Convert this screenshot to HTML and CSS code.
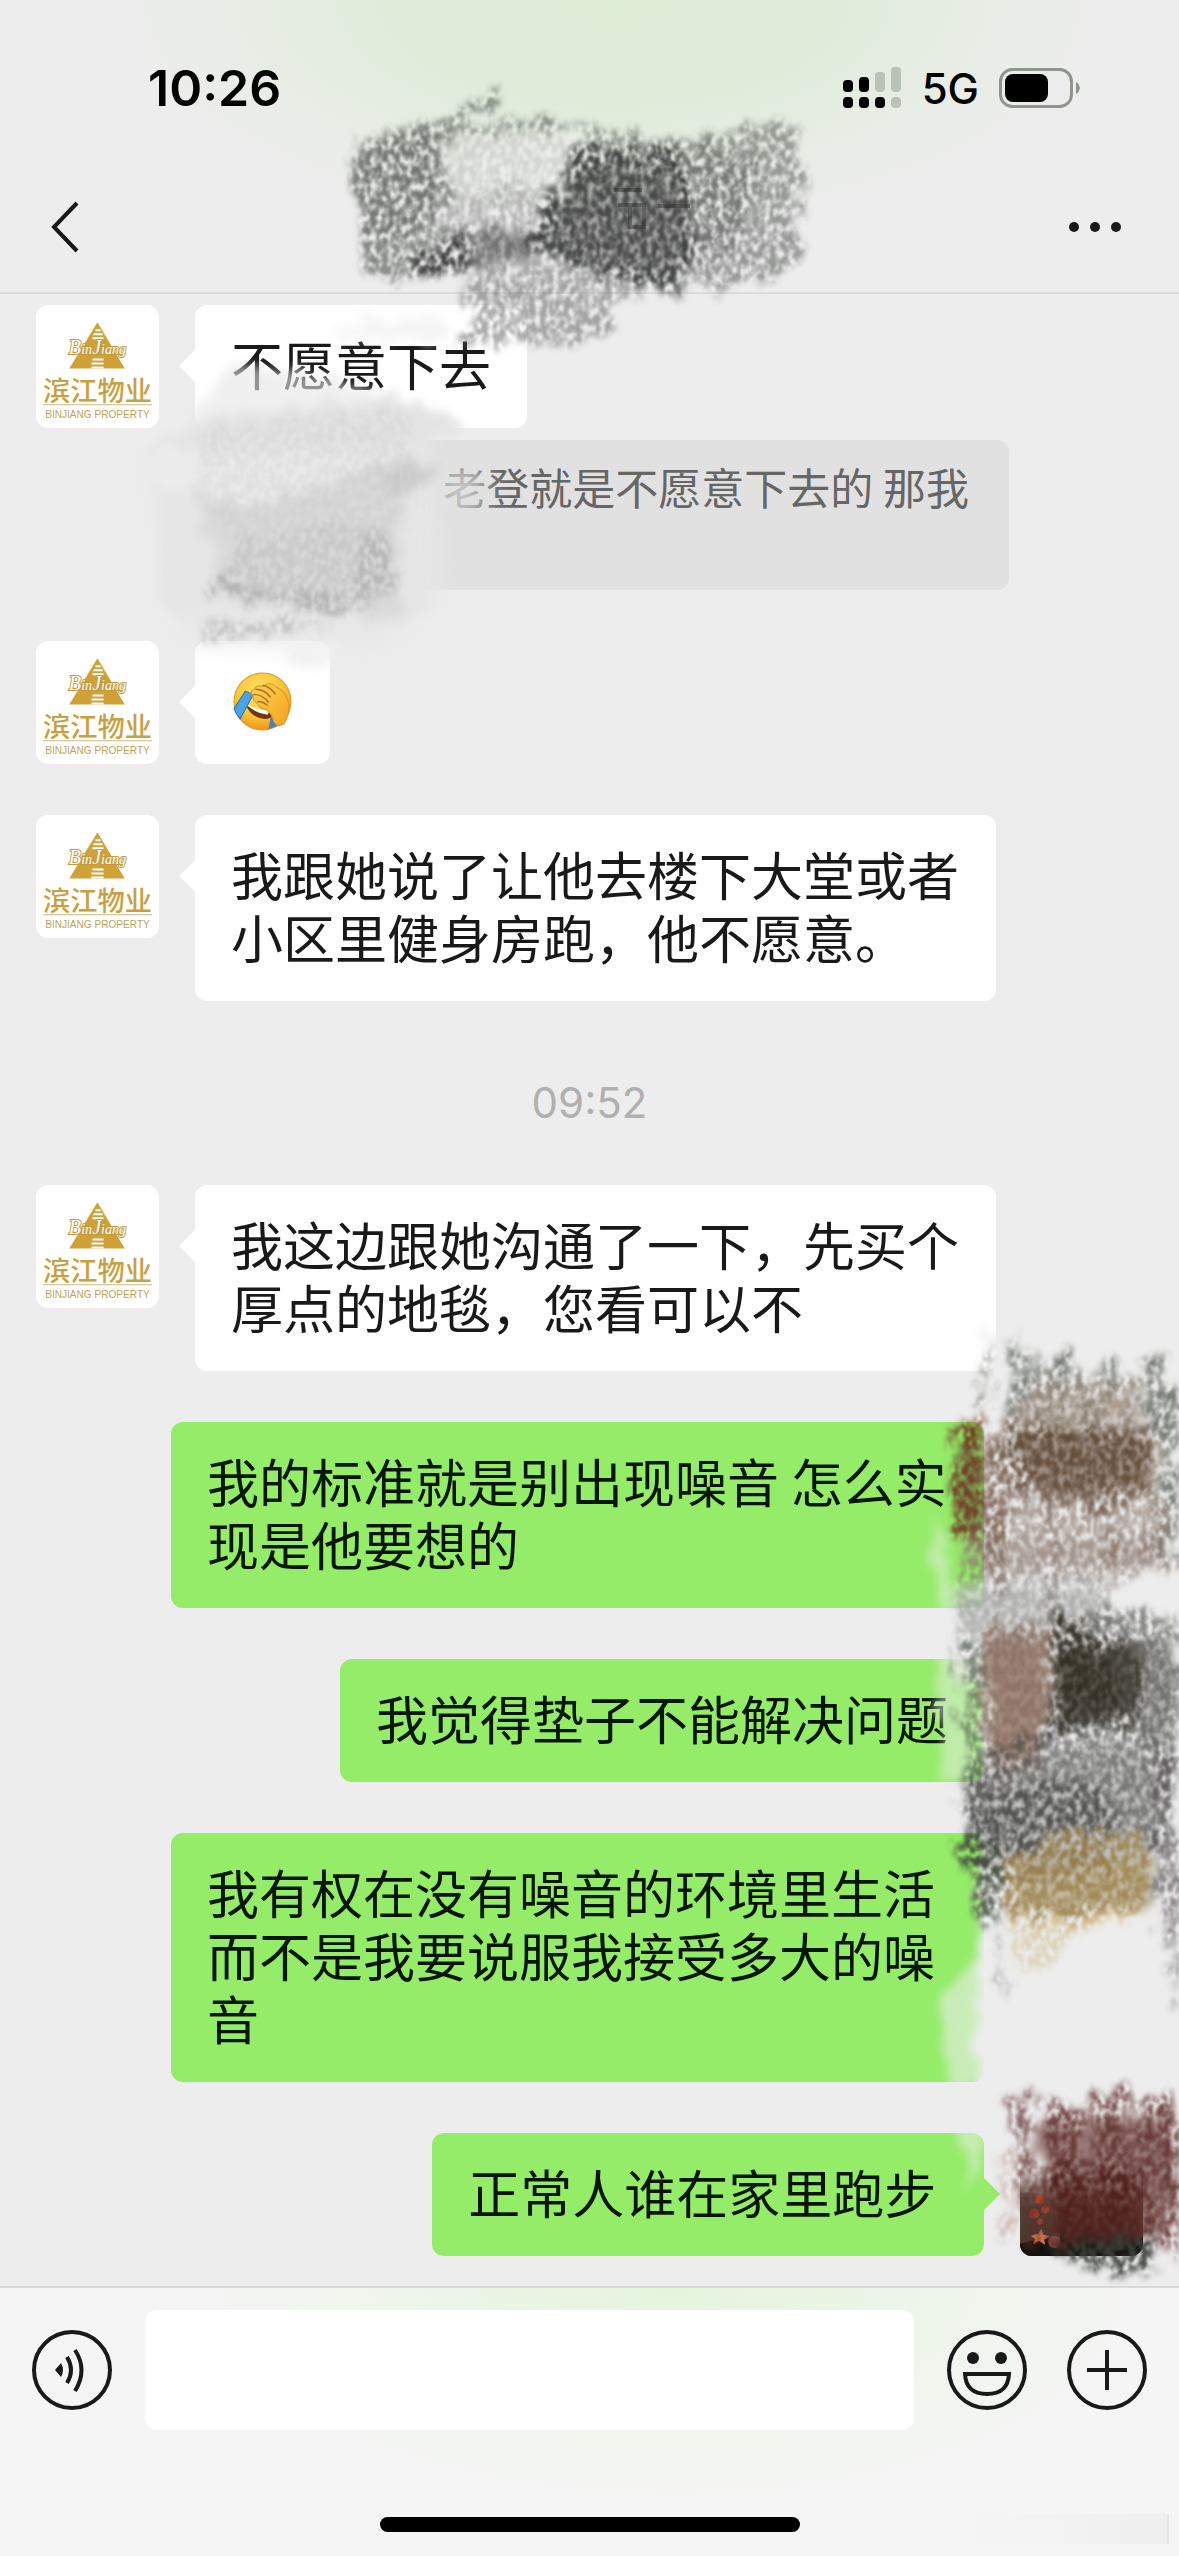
FILE: index.html
```html
<!DOCTYPE html>
<html lang="zh-CN">
<head>
  <meta charset="UTF-8">
  <meta name="viewport" content="width=device-width, initial-scale=1.0">
  <title>聊天</title>
  <link rel="stylesheet" href="styles.css">
</head>
<body>
  <!-- shared symbols and textures -->
  <svg class="defs" aria-hidden="true">
    <defs>
      <filter id="chalk" x="-10%" y="-10%" width="120%" height="120%" color-interpolation-filters="sRGB">
        <feTurbulence type="fractalNoise" baseFrequency="0.17 0.12" numOctaves="3" seed="4" result="noise"/>
        <feColorMatrix in="noise" type="matrix" values="0 0 0 0 0  0 0 0 0 0  0 0 0 0 0  3 0 0 0 -0.85" result="grain"/>
        <feTurbulence type="fractalNoise" baseFrequency="0.07 0.03" numOctaves="4" seed="7" result="wave"/>
        <feDisplacementMap in="SourceGraphic" in2="wave" scale="40" xChannelSelector="G" yChannelSelector="B" result="rough"/>
        <feGaussianBlur in="rough" stdDeviation="3" result="feather"/>
        <feComposite in="feather" in2="grain" operator="in"/>
        <feGaussianBlur stdDeviation="1"/>
      </filter>
      <filter id="smear" x="-20%" y="-20%" width="140%" height="140%" color-interpolation-filters="sRGB">
        <feTurbulence type="fractalNoise" baseFrequency="0.05" numOctaves="3" seed="9" result="noise"/>
        <feDisplacementMap in="SourceGraphic" in2="noise" scale="30" xChannelSelector="R" yChannelSelector="G"/>
        <feGaussianBlur stdDeviation="5"/>
      </filter>
      <filter id="soft" x="-30%" y="-30%" width="160%" height="160%">
        <feGaussianBlur stdDeviation="12"/>
      </filter>
      <symbol id="logo" viewBox="0 0 122 122">
        <path d="M61 17 L88 63 H33 Z" fill="#cfa136"/>
        <path d="M59 25h5M57 29h9M56 33h11M56 54h11M55 58h12M55 62h12" stroke="#fff" stroke-width="2"/>
        <text x="61" y="49" text-anchor="middle" class="logo-script"><tspan class="logo-cap">B</tspan>in<tspan class="logo-cap">J</tspan>iang</text>
        <text x="61" y="95" text-anchor="middle" class="logo-name">滨江物业</text>
        <path d="M7 99H115" stroke="#cdb87c" stroke-width="1"/>
        <text x="61" y="112" text-anchor="middle" class="logo-sub">BINJIANG PROPERTY</text>
      </symbol>
    </defs>
  </svg>

  <div class="screen">
    <header class="top">
      <div class="status">
        <span class="clock">10:26</span>
        <div class="status-right">
          <svg class="signal" viewBox="0 0 60 42">
            <g fill="#000">
              <rect x="1" y="13" width="10" height="12" rx="4"/>
              <rect x="17" y="10" width="10" height="15" rx="4"/>
              <rect x="1" y="30" width="10" height="11" rx="4"/>
              <rect x="17" y="30" width="10" height="11" rx="4"/>
              <rect x="33" y="30" width="10" height="11" rx="4"/>
            </g>
            <g fill="#b9c2b6">
              <rect x="33" y="5" width="10" height="20" rx="4"/>
              <rect x="49" y="0" width="10" height="25" rx="4"/>
              <rect x="49" y="30" width="10" height="11" rx="4"/>
            </g>
          </svg>
          <span class="network">5G</span>
          <svg class="battery" viewBox="0 0 82 40">
            <rect x="1.5" y="1.5" width="71" height="37" rx="12" fill="none" stroke="#8f948d" stroke-width="3"/>
            <rect x="6" y="6" width="43" height="28" rx="8" fill="#000"/>
            <path d="M77 14c5 2 5 10 0 12z" fill="#8f948d"/>
          </svg>
        </div>
      </div>
      <nav class="navbar">
        <button class="icon-button" aria-label="返回">
          <svg class="back" viewBox="0 0 30 52"><path d="M27 2 L4 26 L27 50" fill="none" stroke="#191919" stroke-width="4"/></svg>
        </button>
        <button class="icon-button" aria-label="更多">
          <svg class="more" viewBox="0 0 54 12"><g fill="#191919"><circle cx="6" cy="6" r="5"/><circle cx="27" cy="6" r="5"/><circle cx="48" cy="6" r="5"/></g></svg>
        </button>
      </nav>
    </header>

    <main class="chat">
      <div class="message received tight">
        <svg class="avatar"><use href="#logo"/></svg>
        <p class="bubble">不愿意下去</p>
      </div>
      <div class="notice">老登就是不愿意下去的 那我</div>
      <div class="message received">
        <svg class="avatar"><use href="#logo"/></svg>
        <p class="bubble">
          <svg class="emoji" viewBox="0 0 58 58" role="img" aria-label="捂脸">
            <defs>
              <radialGradient id="face" cx="45%" cy="35%" r="65%">
                <stop offset="0" stop-color="#ffe672"/>
                <stop offset=".65" stop-color="#fcc534"/>
                <stop offset="1" stop-color="#ee951c"/>
              </radialGradient>
              <linearGradient id="hand" x1="0" y1="0" x2="1" y2="1">
                <stop offset="0" stop-color="#ffd452"/>
                <stop offset="1" stop-color="#f4a21f"/>
              </linearGradient>
            </defs>
            <circle cx="29" cy="29" r="28" fill="url(#face)" stroke="#d99a2a"/>
            <path d="M13 33 Q27 41 41 40 Q38 47 30 46 Q17 44 13 33Z" fill="#6d3714"/>
            <path d="M14 32 Q25 38 36 38 L34 42 Q20 40 14 32Z" fill="#fff"/>
            <path d="M12 19 L20 22 L7 46 Q3 42 1 36Z" fill="#4da3e8" stroke="#3273aa"/>
            <path d="M37 45 L44 43 L43 53 L35 56Z" fill="#3f7fca"/>
            <path d="M20 23 Q15 20 21 17 Q23 12 30 14 Q36 8 43 15 Q51 18 54 28 Q57 40 50 51 Q44 55 40 49 Q39 42 33 37 Q26 36 24 31 Q18 27 20 23Z" fill="url(#hand)" stroke="#dd922b"/>
            <path d="M22 17 Q31 17 37 25 M20 22 Q29 22 35 30 M29 13 Q36 14 42 22 M24 29 Q30 29 34 33" fill="none" stroke="#a7702b" stroke-width="1.4"/>
          </svg>
        </p>
      </div>
      <div class="message received">
        <svg class="avatar"><use href="#logo"/></svg>
        <p class="bubble">我跟她说了让他去楼下大堂或者小区里健身房跑，他不愿意。</p>
      </div>
      <time class="time">09:52</time>
      <div class="message received">
        <svg class="avatar"><use href="#logo"/></svg>
        <p class="bubble">我这边跟她沟通了一下，先买个厚点的地毯，您看可以不</p>
      </div>
      <div class="message sent">
        <p class="bubble">我的标准就是别出现噪音 怎么实现是他要想的</p>
        <div class="avatar blank"></div>
      </div>
      <div class="message sent">
        <p class="bubble">我觉得垫子不能解决问题</p>
        <div class="avatar blank"></div>
      </div>
      <div class="message sent">
        <p class="bubble">我有权在没有噪音的环境里生活 而不是我要说服我接受多大的噪音</p>
        <div class="avatar blank"></div>
      </div>
      <div class="message sent last">
        <p class="bubble">正常人谁在家里跑步&nbsp;</p>
        <svg class="avatar photo" viewBox="0 0 122 122">
          <defs>
            <linearGradient id="fade" x1="0" y1="0" x2="0" y2="1">
              <stop offset=".3" stop-color="#4a302a" stop-opacity="0"/>
              <stop offset=".6" stop-color="#43271f"/>
              <stop offset="1" stop-color="#191512"/>
            </linearGradient>
          </defs>
          <rect width="122" height="123" fill="url(#fade)"/>
          <path d="M0 60 Q20 55 36 70 L42 122 H0Z" fill="#5c5243" opacity=".6"/>
          <path d="M0 110 Q40 98 60 114 T122 104 V123 H0Z" fill="#14130f"/>
          <g fill="#b5492f">
            <circle cx="14" cy="80" r="5"/><circle cx="25" cy="76" r="4"/><circle cx="20" cy="66" r="5"/><circle cx="20" cy="88" r="3"/>
          </g>
          <path d="M10 102l8-2 3-5 2 6 7 1-6 4 1 5-6-4-6 3 2-5z" fill="#d2794a"/>
          <circle cx="34" cy="108" r="6" fill="#8d4f45"/>
        </svg>
      </div>
    </main>

    <footer class="bottom">
      <form class="composer">
        <button type="button" class="icon-button" aria-label="语音">
          <svg class="tool" viewBox="0 0 80 80" fill="none" stroke="#191919" stroke-width="4">
            <circle cx="40" cy="40" r="38"/>
            <path d="M23 40 L29 33 Q33 40 29 47 Z" fill="#191919" stroke="none"/>
            <path d="M35 27 Q43 40 35 53 M43 20 Q56 40 43 61"/>
          </svg>
        </button>
        <input class="field" type="text" aria-label="输入消息">
        <button type="button" class="icon-button" aria-label="表情">
          <svg class="tool" viewBox="0 0 80 80" fill="none" stroke="#191919" stroke-width="4">
            <circle cx="40" cy="40" r="38"/>
            <circle cx="26" cy="28" r="6" fill="#191919" stroke="none"/>
            <circle cx="54" cy="28" r="6" fill="#191919" stroke="none"/>
            <path d="M18 44 H62 Q61 64 40 64 Q19 64 18 44Z"/>
          </svg>
        </button>
        <button type="button" class="icon-button" aria-label="更多功能">
          <svg class="tool" viewBox="0 0 80 80" fill="none" stroke="#191919" stroke-width="4">
            <circle cx="40" cy="40" r="38"/>
            <path d="M40 20V60M20 40H60"/>
          </svg>
        </button>
      </form>
      <div class="home-bar"></div>
      <div class="corner"></div>
    </footer>

    <!-- name in the title bar, scribbled out -->
    <svg class="scribble scribble-title" viewBox="330 80 500 280">
      <path d="M555 128 L590 136 L568 185 L480 190 L460 150Z" fill="#eef1ec" opacity=".8" filter="url(#smear)"/>
      <g filter="url(#chalk)">
        <path d="M350 142 L430 118 L500 92 L500 104 L455 122 L570 122 L566 130 L450 132 L440 228 L540 232 L530 262 L366 284 L358 200Z" fill="#555a54" opacity=".65"/>
        <path d="M440 190 L545 185 L540 235 L440 235Z" fill="#666" opacity=".4"/>
        <path d="M440 130 L540 128 L566 140 L560 180 L440 190Z" fill="#888" opacity=".25"/>
        <path d="M358 145 L440 125 L436 225 L360 255Z" fill="#444" opacity=".3"/>
        <path d="M572 116 L612 126 L655 142 L800 120 L802 155 L795 270 L712 292 L662 292 L520 250 L540 205 L566 190 L568 150 L596 146Z" fill="#505350" opacity=".55"/>
        <path d="M568 150 L668 144 L700 200 L690 260 L672 294 L520 250 L545 200 L566 188Z" fill="#2c2e2d" opacity=".8"/>
        <path d="M668 150 L760 155 L745 250 L680 270Z" fill="#333" opacity=".3"/>
        <path d="M408 262 L470 235 L468 266 L412 276Z" fill="#333" opacity=".8"/>
        <path d="M475 272 L560 262 L650 292 L610 304 L612 340 L458 344 L472 310 L460 304Z" fill="#666" opacity=".55"/>
      </g>
      <path d="M474 234 L535 230 L530 262 L472 268Z M580 170 L660 165 L690 210 L680 270 L610 270 L545 248Z" fill="#555" opacity=".45" filter="url(#smear)"/>
      <path d="M614 190h28M618 205h26v22h-14v-20M658 206h32" fill="none" stroke="#222" stroke-width="4" opacity=".4"/>
    </svg>

    <!-- start of the quoted notice, smudged -->
    <svg class="scribble scribble-left" viewBox="90 300 420 400">
      <g filter="url(#soft)">
        <path d="M185 435 L390 405 L425 430 L440 600 L380 650 L180 640 L150 480Z" fill="#e8e8e8"/>
        <path d="M440 465 H484 V520 H440Z" fill="#e1e1e1" opacity=".8"/>
      </g>
      <g filter="url(#smear)">
        <path d="M190 425 L250 410 L380 400 L420 400 L470 430 L380 450 L140 450Z" fill="#e4e4e4"/>
        <path d="M230 365 L330 375 L380 395 L250 420 L180 425Z" fill="#e6e6e6" opacity=".6"/>
        <path d="M360 320 L450 318 L440 340 L330 338Z" fill="#eee" opacity=".6"/>
        <path d="M160 445 H425 V610 H160Z" fill="#e6e6e6"/>
        <path d="M130 450 L300 450 L400 460 L380 485 L240 515 L140 480Z" fill="#ebebeb"/>
        <path d="M195 490 L245 510 L400 460 L400 620 L220 600Z" fill="#dadada"/>
        <path d="M380 465 L430 462 L430 485 L390 495Z" fill="#d0d0d0"/>
        <path d="M290 645 L335 646 L325 670 L290 665Z" fill="#f1f1f1"/>
      </g>
      <g filter="url(#chalk)" opacity=".35">
        <path d="M200 430 L400 405 L420 470 L395 535 L240 560 L200 500Z" fill="#bbb" opacity=".6"/>
        <path d="M235 540 L365 520 L395 560 L380 612 L215 595Z" fill="#aaa"/>
        <path d="M360 530 L395 535 L392 590 L355 600Z" fill="#777"/>
        <path d="M208 578 L370 604 L368 613 L210 594Z" fill="#666"/>
        <path d="M205 624 L250 616 L340 624 L300 630 L208 644Z" fill="#888"/>
      </g>
    </svg>

    <!-- avatars on the right, scribbled out -->
    <svg class="scribble scribble-right" viewBox="919 1290 260 1010">
      <g filter="url(#smear)" fill="#ededed">
        <path d="M984 1330 L1005 1330 V1430 H988Z" opacity=".8"/>
        <path d="M930 1515 L950 1560 L965 1615 L938 1615Z" opacity=".5"/>
        <path d="M960 1580 H1179 V1680 H950Z" opacity=".7"/>
        <path d="M932 1650 L980 1655 L970 1785 L946 1790Z" opacity=".5"/>
        <path d="M980 1640 H1179 V2095 H980Z"/>
        <path d="M978 1920 L1000 1920 V2090 H978Z"/>
        <path d="M940 1990 L978 1960 V2090 H946Z" opacity=".6"/>
        <path d="M955 2125 L988 2125 L985 2150 L966 2185Z" opacity=".55"/>
      </g>
      <!-- smooth pigment under the grain -->
      <g filter="url(#smear)">
        <path d="M1010 1436 H1148 V1490 L1040 1500Z M958 1440 L984 1440 L980 1530 L960 1525Z" fill="#67503d" opacity=".6"/>
        <path d="M1020 1395 H1150 V1440 H1020Z M965 1540 H1160 V1565 H965Z" fill="#a5968c" opacity=".4"/>
        <path d="M965 1590 H1100 V1640 H965Z" fill="#b4b4b1" opacity=".4"/>
        <path d="M985 1635 L1046 1640 L1040 1760 L990 1760Z" fill="#8e7263" opacity=".8"/>
        <path d="M1055 1645 L1140 1648 L1138 1710 L1060 1730Z" fill="#3a3228" opacity=".8"/>
        <path d="M1140 1640 H1175 V1740 H1145Z" fill="#777672" opacity=".5"/>
        <path d="M970 1775 L1130 1740 L1165 1780 L1160 1860 L980 1870Z" fill="#747370" opacity=".35"/>
        <path d="M1010 1860 H1150 V1908 H1020Z" fill="#9c8858" opacity=".5"/>
        <path d="M1034 2125 L1168 2115 L1174 2235 L1060 2238Z" fill="#6d413c" opacity=".65"/>
      </g>
      <g filter="url(#chalk)">
        <!-- first block -->
        <g fill="none" stroke="#565b50" opacity=".75">
          <path d="M1015 1338V1450M1060 1350V1450M1154 1356V1440" stroke-width="18"/>
          <path d="M1036 1352V1450M1110 1360V1450M1090 1375V1450" stroke-width="16"/>
          <path d="M984 1350 L974 1450" stroke-width="4"/>
          <path d="M1170 1385V1560M1132 1380V1450" stroke-width="14"/>
        </g>
        <path d="M1025 1380 H1140 V1460 H1020Z" fill="#a08a7a" opacity=".6"/>
        <path d="M956 1424 L980 1422 L984 1540 L954 1538Z" fill="#704225"/>
        <path d="M984 1432 H1006 L1005 1560 L980 1580Z" fill="#7c6052" opacity=".75"/>
        <path d="M1004 1428 L1150 1430 V1490 L1110 1515 L1040 1500 L1004 1490Z" fill="#5d4531" opacity=".85"/>
        <path d="M958 1540 L1010 1490 L1158 1490 L1176 1570 L1030 1580 L962 1588Z" fill="#857367" opacity=".6"/>
        <path d="M1000 1450 V1600 M1050 1480V1610 M1110 1480V1590 M1155 1440V1560" stroke="#7b6455" stroke-width="12" opacity=".5"/>
        <path d="M956 1585 L1110 1572 L1115 1650 L956 1650Z" fill="#777a75" opacity=".4"/>
        <!-- second block -->
        <path d="M960 1640 L982 1640 V1790 H962Z" fill="#475542" opacity=".65"/>
        <path d="M980 1624 H1050 V1750 L1010 1785 L984 1770Z" fill="#896f61" opacity=".8"/>
        <path d="M1048 1620 L1060 1612 L1105 1640 L1145 1642 V1720 L1050 1738Z" fill="#302b20" opacity=".9"/>
        <path d="M1090 1612 H1160 L1179 1640 V1765 L1150 1760 L1120 1700Z" fill="#484945" opacity=".6"/>
        <path d="M960 1780 L1046 1720 L1110 1710 L1176 1760 V1850 L970 1862Z" fill="#4a4947" opacity=".6"/>
        <path d="M965 1795 L1110 1780 V1880 L975 1885Z" fill="#3b3a38" opacity=".6"/>
        <path d="M962 1840 H1002 L1000 1915 L984 1925 L968 1900Z" fill="#414d3b" opacity=".8"/>
        <path d="M1000 1845 H1150 V1910 L1010 1920Z" fill="#54504b" opacity=".7"/>
        <path d="M1150 1760 H1179 V1990 L1160 1910Z" fill="#4b4548" opacity=".6"/>
        <path d="M1005 1860 L1068 1828 L1150 1835 V1915 L1070 1930 L1012 1920Z" fill="#c8a251" opacity=".55"/>
        <path d="M990 1890 L1005 1990 M1168 1920 L1176 2000" stroke="#767270" stroke-width="6" opacity=".6"/>
        <path d="M1008 1920 H1090 L1040 1975 H1015Z" fill="#cdbb8a" opacity=".5"/>
        <!-- third block -->
        <g fill="none" stroke="#5d2b27">
          <path d="M1018 2094 L1036 2240" stroke-width="18" opacity=".7"/>
          <path d="M1055 2098V2248M1075 2110V2248" stroke-width="20" opacity=".8"/>
          <path d="M1104 2090V2248M1121 2092V2248" stroke-width="18" opacity=".8"/>
          <path d="M1145 2098V2250M1165 2098 L1172 2250" stroke-width="20" opacity=".8"/>
        </g>
        <path d="M1050 2165 H1140 V2245 H1060Z" fill="#4b1a15" opacity=".7"/>
        <path d="M1006 2150 V2245" stroke="#bda193" stroke-width="10" opacity=".7"/>
        <path d="M1050 2242 L1150 2236 L1155 2270 L1110 2274 L1062 2260Z" fill="#3c413b" opacity=".9"/>
      </g>
    </svg>
  </div>
</body>
</html>
```

FILE: styles.css
```css
* {
  box-sizing: border-box;
  margin: 0;
  padding: 0;
}

body {
  font-family: "Noto Sans CJK SC", sans-serif;
  background: #ededed;
  color: #191919;
}

.defs {
  position: absolute;
  width: 0;
  height: 0;
}

.screen {
  position: relative;
  min-height: 100vh;
  display: flex;
  flex-direction: column;
  overflow: hidden;
}

button {
  border: none;
  background: none;
  cursor: pointer;
}

svg {
  display: block;
}

/* top bar */
.top {
  height: 294px;
  border-bottom: 2px solid #dcdcdc;
  background: radial-gradient(ellipse 42% 78% at 52% 0, #deedd6 0%, #dfecd9 40%, rgba(237, 237, 237, 0) 100%), #ededed;
}

.status {
  display: flex;
  justify-content: space-between;
  align-items: center;
  height: 176px;
  padding: 0 98px 0 148px;
}

.clock {
  font-family: Inter, sans-serif;
  font-size: 50px;
  font-weight: 600;
  color: #000;
}

.status-right {
  display: flex;
  align-items: center;
  gap: 20px;
}

.signal {
  width: 60px;
  height: 42px;
}

.network {
  font-family: Inter, sans-serif;
  font-size: 42px;
  font-weight: 500;
  color: #000;
}

.battery {
  width: 82px;
  height: 40px;
}

.navbar {
  display: flex;
  justify-content: space-between;
  align-items: center;
  height: 102px;
  padding: 0 57px 0 50px;
}

.back {
  width: 30px;
  height: 52px;
}

.more {
  width: 54px;
  height: 12px;
}

/* messages */
.chat {
  flex: 1;
  padding: 11px 36px 0;
}

.message {
  display: flex;
  align-items: flex-start;
  gap: 36px;
  margin-bottom: 51px;
}

.sent {
  justify-content: flex-end;
}

.tight {
  margin-bottom: 12px;
}

.last {
  margin-bottom: 30px;
}

.avatar {
  flex: none;
  width: 123px;
  height: 123px;
  border-radius: 12px;
  background: #fff;
}

.blank,
.photo {
  background: none;
}

.bubble {
  position: relative;
  max-width: 801px;
  padding: 27px 36px 33px;
  border-radius: 12px;
  background: #fff;
  font-size: 52px;
  line-height: 63px;
}

.sent .bubble {
  max-width: 813px;
  background: #95ec69;
  color: #061504;
}

.received .bubble::before,
.last .bubble::after {
  content: "";
  position: absolute;
  top: 45px;
  border: 16px solid transparent;
}

.received .bubble::before {
  right: 100%;
  border-left: none;
  border-right-color: #fff;
}

.last .bubble::after {
  left: 100%;
  border-right: none;
  border-left-color: #95ec69;
}

.emoji {
  width: 63px;
  height: 63px;
  padding: 4px 2px 0;
}

.notice {
  height: 150px;
  margin: 0 134px 51px;
  padding: 17px 40px;
  border-radius: 12px;
  background: #e1e1e1;
  color: #666;
  font-size: 43px;
  line-height: 58px;
  text-align: right;
}

.time {
  display: block;
  margin-bottom: 51px;
  padding-top: 20px;
  font-family: Inter, sans-serif;
  font-size: 42px;
  line-height: 62px;
  text-align: center;
  color: #b0b0b0;
}

.logo-script {
  font: italic 14px "Liberation Serif", serif;
  fill: #fff;
  stroke: #c39a3c;
  stroke-width: 2px;
  paint-order: stroke;
}

.logo-cap {
  font-size: 20px;
}

.logo-name {
  font-size: 27px;
  font-weight: 500;
  fill: #c9a040;
}

.logo-sub {
  font: 10px "Liberation Sans", sans-serif;
  fill: #bda35a;
}

/* input bar */
.bottom {
  position: relative;
  height: 270px;
  border-top: 2px solid #d9dad8;
  background: radial-gradient(ellipse 40% 80% at 57% 0, #e5f5dd 0%, rgba(246, 246, 246, 0) 100%), #f5f5f5;
}

.composer {
  display: flex;
  align-items: center;
  gap: 40px;
  padding: 22px 32px 0;
}

.composer .icon-button:first-child {
  margin-right: -7px;
}

.field {
  flex: 1;
  min-width: 0;
  height: 120px;
  margin-right: -7px;
  padding: 0 30px;
  border: none;
  border-radius: 12px;
  background: #fff;
  font-family: inherit;
  font-size: 52px;
}

.tool {
  width: 80px;
  height: 80px;
}

.home-bar {
  width: 420px;
  max-width: 60%;
  height: 15px;
  margin: 87px auto 0;
  border-radius: 8px;
  background: #000;
}

.corner {
  position: absolute;
  right: 10px;
  bottom: 12px;
  width: 200px;
  height: 30px;
  border-right: 2px solid #e4e4e4;
  background: linear-gradient(to right, rgba(240, 240, 240, 0), #efefef);
}

/* scribbles lying over the conversation */
.scribble {
  position: absolute;
  pointer-events: none;
}

.scribble-title {
  top: 80px;
  left: 28%;
  width: 500px;
  height: 280px;
}

.scribble-left {
  top: 300px;
  left: 90px;
  width: 420px;
  height: 400px;
}

.scribble-right {
  top: 1290px;
  right: 0;
  width: 260px;
  height: 1010px;
}
```
